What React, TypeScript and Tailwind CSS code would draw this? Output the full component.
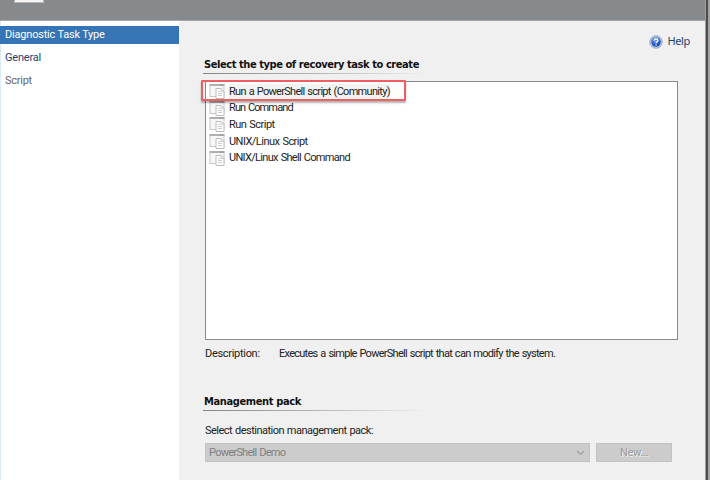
const ITEMS = [
  { label: 'Run a PowerShell script (Community)', spacing: 'tracking-[-0.7px]' },
  { label: 'Run Command', spacing: 'tracking-[-0.88px]' },
  { label: 'Run Script', spacing: 'tracking-[-0.53px]' },
  { label: 'UNIX/Linux Script', spacing: 'tracking-[-0.53px]' },
  { label: 'UNIX/Linux Shell Command', spacing: 'tracking-[-0.69px]' },
];

function TaskIcon() {
  return (
    <svg width="16" height="16" viewBox="0 0 16 16" className="shrink-0">
      <rect x="1" y="1.5" width="14" height="12" fill="#f7f7f7" stroke="#c8c8c8" />
      <path d="M0.5 2h15" stroke="#b0b0b0" strokeWidth="2" />
      <path d="M11 2h1M13 2h1" stroke="#777" />
      <path d="M7 5.5h5l3 3v7h-8z" fill="#fff" stroke="#bdbdbd" />
      <path d="M12 5.5v3h3M9 8.5h2M9 10.5h4M9 12.5h4" fill="none" stroke="#cccccc" />
    </svg>
  );
}

function HelpIcon() {
  return (
    <svg width="14" height="14" viewBox="0 0 14 14" className="mt-px">
      <defs>
        <radialGradient id="ball" cx="40%" cy="30%" r="75%">
          <stop offset="0" stopColor="#79a8ef" />
          <stop offset="0.55" stopColor="#2c62cf" />
          <stop offset="1" stopColor="#1c47a8" />
        </radialGradient>
      </defs>
      <circle cx="7" cy="7" r="6.2" fill="#c5d3e8" stroke="#94a5c4" />
      <circle cx="7" cy="7" r="4.8" fill="url(#ball)" />
      <path d="M5.1 5.5C5.3 3.5 9 3.5 9 5.5C9 6.8 7.1 6.8 7.1 8.3M7.1 9.4v1.2" fill="none" stroke="#fff" strokeWidth="1.4" />
    </svg>
  );
}

function Heading({ text, className }: { text: string; className: string }) {
  return (
    <div className="-ml-0.5">
      <h2 className={`h-[17px] pl-[1px] text-[11px] leading-[17px] font-bold text-[#111] whitespace-nowrap font-['DejaVu_Sans_Condensed','DejaVu_Sans',sans-serif] ${className}`}>
        {text}
      </h2>
      <div className="h-px w-[224px] bg-linear-to-r from-[#858585] via-[#b5b5b5] to-[#f0f0f0]" />
    </div>
  );
}

export default function App() {
  return (
    <div className="flex h-[480px] w-[710px] overflow-hidden bg-[#f0f0f0] font-[Roboto,'Liberation_Sans',sans-serif] text-[11px] leading-[14px] tracking-[-0.3px] text-[#222]">
      <div className="flex w-[705px] flex-col">
        <header className="h-[21px] shrink-0 border-b border-[#a5a7a8] bg-[#868a8d] pl-[14px]">
          <div className="h-[3px] w-[30px] border-x border-b border-[#b5b5b5] bg-[#f5f5f5]" />
        </header>
        <div className="flex min-h-0 flex-1">
          <nav className="w-[179px] shrink-0 bg-white pt-[5px] shadow-[inset_1px_0_0_#dcebf5]">
            <div className="h-[18px] bg-[#3575b5] pl-[5px] leading-[17px] tracking-[-0.2px] text-white">Diagnostic Task Type</div>
            <div className="mt-[5px] h-[18px] pl-[5px] leading-[18px] tracking-[-0.2px] text-[#263f70]">General</div>
            <div className="mt-[5px] h-[18px] pl-[5px] leading-[18px] tracking-[-0.25px] text-[#666]">Script</div>
          </nav>
          <main className="flex min-w-0 flex-1 flex-col pl-[26px]">
            <div className="flex h-[35px] items-start justify-end gap-[4px] pt-[13px] pr-[15px]">
              <HelpIcon />
              <span className="font-['Noto_Sans',sans-serif] text-[11px] leading-[14px] tracking-[-0.35px] text-[#263f70]">Help</span>
            </div>
            <Heading text="Select the type of recovery task to create" className="tracking-[-0.43px]" />
            <div className="relative mt-[7px] h-[259px] w-[473px] border border-[#858990] bg-white pt-[1px] pl-[3px]">
              {ITEMS.map((item, i) => (
                <div key={item.label} className="flex h-[16.6px] items-center gap-[4px]">
                  <TaskIcon />
                  <span className={`leading-[15px] [word-spacing:0.8px] ${item.spacing} ${i === 0 ? 'bg-[#f2f2f2]' : ''}`}>{item.label}</span>
                </div>
              ))}
              <div className="absolute -top-[2px] -left-[5px] h-[21px] w-[205px] rounded-[1px] border-2 border-[#ee5f62] shadow-[0_2px_2px_rgba(0,0,0,0.3)]" />
            </div>
            <div className="mt-[7px] flex h-[14px]">
              <span className="w-[74px]">Description:</span>
              <span className="tracking-[-0.73px] whitespace-nowrap [word-spacing:0.8px]">Executes a simple PowerShell script that can modify the system.</span>
            </div>
            <div className="h-[32px]" />
            <Heading text="Management pack" className="tracking-[-0.37px]" />
            <div className="mt-[13px] h-[19px] tracking-[-0.52px] [word-spacing:0.7px]">Select destination management pack:</div>
            <div className="flex gap-[6px]">
              <div className="flex h-[19px] w-[385px] items-center justify-between border border-[#c2c2c2] bg-[#cccccc] pr-1 pl-[3px] text-[#808080]">
                <span className="tracking-[-0.73px] [word-spacing:0.8px]">PowerShell Demo</span>
                <svg width="9" height="6" viewBox="0 0 9 6"><path d="M1 1l3.5 3.5L8 1" fill="none" stroke="#a0a0a0" strokeWidth="1.2" /></svg>
              </div>
              <div className="h-[19px] w-[76px] border border-[#c3c3c3] bg-[#cccccc] text-center leading-[18px] text-[#999] [text-shadow:1px_1px_0_#f5f5f5]">New...</div>
            </div>
          </main>
        </div>
      </div>
      <div className="w-px bg-[#65acdf]" />
      <div className="w-[2px] bg-[#4b4c50]" />
      <div className="w-[2px] bg-[#a5a5a5]" />
    </div>
  );
}
